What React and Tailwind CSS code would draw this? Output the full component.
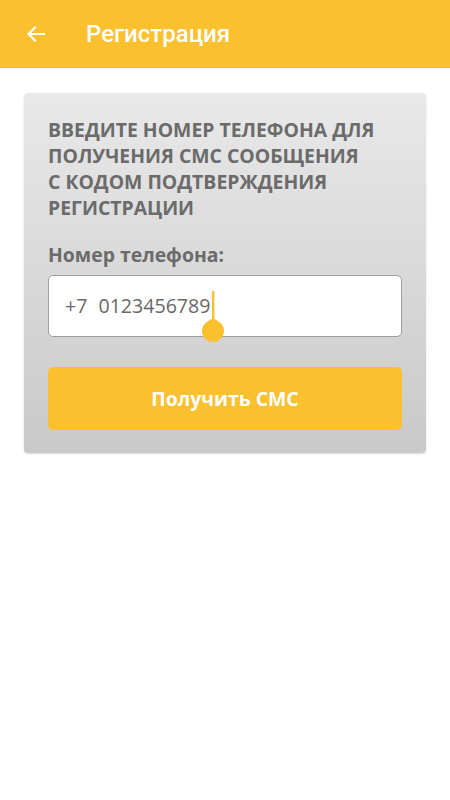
import React, { useState } from 'react';

function BackArrow() {
  return (
    <svg width="24" height="24" viewBox="0 0 24 24" fill="none">
      <path d="M20 12H4.5M11 5.5L4.5 12l6.5 6.5" stroke="white" strokeWidth="2.2" strokeLinecap="square" />
    </svg>
  );
}

// text cursor with the selection handle under it
function CursorHandle() {
  return (
    <svg width="24" height="54" viewBox="0 0 24 54" className="absolute left-[-12px] top-0">
      <rect x="11" y="0" width="2.4" height="30" fill="#fbc02d" />
      <path d="M12 27 L17.86 30.69 A11 11 0 1 1 6.14 30.69 Z" fill="#fbc02d" />
    </svg>
  );
}

export default function App() {
  const [phone, setPhone] = useState('0123456789');

  return (
    <div className="min-h-screen bg-white" style={{ fontFamily: '"Open Sans", sans-serif' }}>
      <header className="h-[68px] bg-[#fbc02d] flex items-center px-6">
        <BackArrow />
        <h1 className="ml-[38px] text-white text-[24px] font-medium" style={{ fontFamily: 'Roboto, sans-serif' }}>
          Регистрация
        </h1>
      </header>

      <div className="px-6 pt-[25px]">
        <div className="rounded-[4px] bg-gradient-to-b from-[#e9e9e9] to-[#c9c9c9] shadow-[0_1px_2px_rgba(0,0,0,0.15)] px-6 pt-[24px] pb-[23px]">
          <p className="text-[#6b6b6b] font-bold text-[19.4px] leading-[26px] uppercase">
            Введите номер телефона для<br />
            получения смс сообщения<br />
            с кодом подтверждения<br />
            регистрации
          </p>

          <label className="block mt-[21px] text-[#6b6b6b] font-bold text-[19.4px] leading-[26px]">
            Номер телефона:
          </label>

          <div className="relative mt-[7px] h-[62px] bg-white border border-[#9e9e9e] rounded-[5px] flex items-center pl-[16px] text-[19.6px] text-[#686868]">
            <span>+7</span>
            <span className="ml-[11px] relative">
              {phone}
              <span className="absolute right-[-3px] top-0">
                <CursorHandle />
              </span>
            </span>
          </div>

          <button
            onClick={() => setPhone(phone)}
            className="mt-[30px] w-full h-[63px] bg-[#fbc02d] rounded-[5px] text-white font-bold text-[19.4px]"
          >
            Получить СМС
          </button>
        </div>
      </div>
    </div>
  );
}
